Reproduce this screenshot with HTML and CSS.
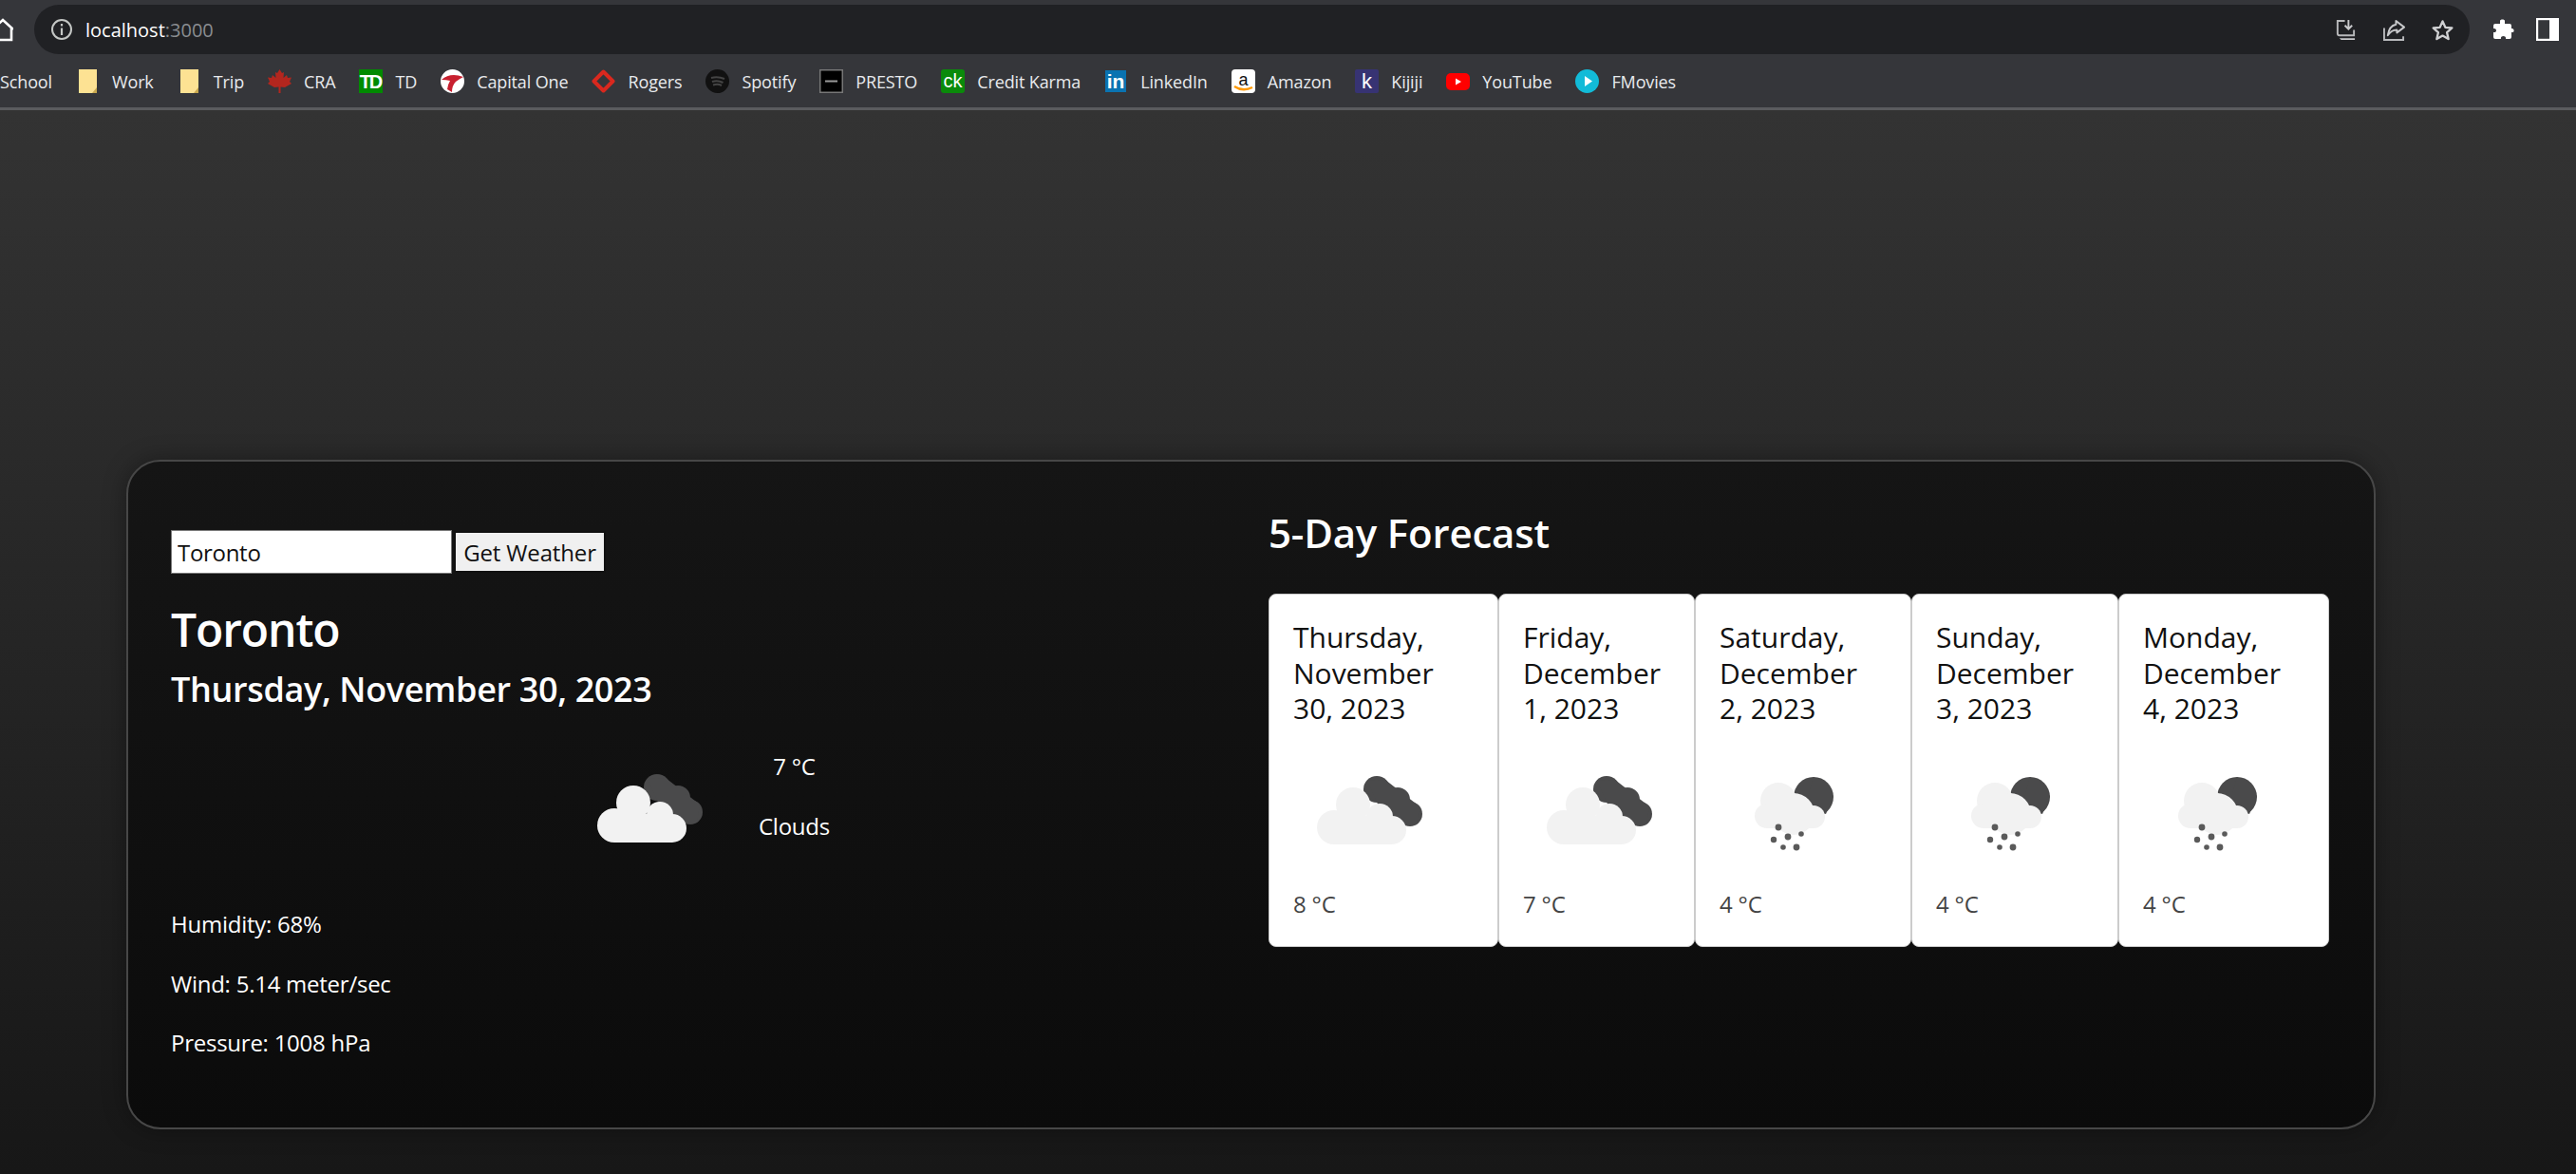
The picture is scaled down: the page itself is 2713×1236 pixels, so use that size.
FILE: index.html
```html
<!DOCTYPE html>
<html lang="en">
<head>
<meta charset="utf-8">
<title>Weather</title>
<link rel="stylesheet" href="styles.css">
</head>
<body>
<svg class="defs" width="0" height="0" aria-hidden="true">
  <defs>
    <symbol id="clouds" viewBox="0 0 150 150">
      <g class="dark">
        <circle cx="88" cy="50" r="14"/><circle cx="110" cy="61" r="13"/><circle cx="123" cy="76" r="13"/>
        <path d="M78 41 L97 40 L133 68 L130 87 L100 90 Z"/>
      </g>
      <g class="light">
        <circle cx="63" cy="66" r="18"/><circle cx="43" cy="90" r="18"/><circle cx="91" cy="79" r="14"/><circle cx="104" cy="93" r="15"/>
        <rect x="43" y="78" width="61" height="30"/>
      </g>
    </symbol>
    <symbol id="rain" viewBox="0 0 150 150">
      <circle class="dark" cx="99" cy="58" r="21"/>
      <path class="dark" d="M99 37 L120 57 L112 76 L90 70 Z"/>
      <g class="light">
        <circle cx="62" cy="62" r="19"/><circle cx="50" cy="78" r="13"/><circle cx="78" cy="76" r="22"/><circle cx="99" cy="79" r="12"/>
        <rect x="50" y="70" width="49" height="21"/>
      </g>
      <g class="drops">
        <circle cx="62" cy="90" r="3.4"/><circle cx="57" cy="103" r="3.2"/><circle cx="72" cy="100" r="3.4"/><circle cx="86" cy="97" r="2.8"/><circle cx="67" cy="111" r="2.8"/><circle cx="81" cy="111" r="3.4"/>
      </g>
    </symbol>
  </defs>
</svg>

<header class="chrome">
  <div class="toolbar">
    <svg class="home" viewBox="0 0 14 28"><path d="M-8 14 L3 4 L14 14 M12 12 V25 H-8" fill="none" stroke="#fff" stroke-width="2.600"/></svg>
    <div class="omnibox">
      <svg class="info" viewBox="0 0 24 24"><circle cx="12" cy="12" r="10" fill="none" stroke="#c4c7c5" stroke-width="2"/><path d="M12 10.500V18M12 6V8.500" stroke="#c4c7c5" stroke-width="2.200"/></svg>
      <span class="url">localhost<span class="port">:3000</span></span>
      <div class="omni-actions">
        <svg class="action" viewBox="0 0 24 24"><path d="M11 2H3V16Q3 18 5 18H21V12" fill="none" stroke="#b8b9bb" stroke-width="2"/><path d="M15 1V10M11 7L15 11L19 7" fill="none" stroke="#c8c9cb" stroke-width="2"/><path d="M5 21H22V23H7Z" fill="#c8c9cb"/></svg>
        <svg class="action" viewBox="0 0 24 24"><path d="M1 10V23H22V19" fill="none" stroke="#b8b9bb" stroke-width="2"/><path d="M14 2L23 9L15 15V12C10 12 8 14 5 18C6 11 9 7 14 6Z" fill="none" stroke="#c8c9cb" stroke-width="2" stroke-linejoin="round"/></svg>
        <svg class="action" viewBox="0 0 24 24"><path d="M12 2.500L15 9.200L22.300 9.900L16.800 14.800L18.400 22L12 18.300L5.600 22L7.200 14.800L1.700 9.900L9 9.200Z" fill="none" stroke="#d0d1d3" stroke-width="2.400" stroke-linejoin="round"/></svg>
      </div>
    </div>
    <svg class="tool" viewBox="0 0 24 24"><path d="M9 3C9 1 14 1 14 3V6H19Q21 6 21 8V11C24 10 25 16 21 15V20Q21 22 19 22H15C16 18 9 18 10 22H4Q2 22 2 20V15C6 16 6 10 2 11V8Q2 6 4 6H9Z" fill="#fff"/></svg>
    <svg class="tool" viewBox="0 0 24 24"><rect x="1" y="1" width="22" height="22" fill="none" stroke="#fff" stroke-width="2.400"/><rect x="14" y="1" width="9" height="22" fill="#fff"/></svg>
  </div>
  <nav class="bookmarks">
    <a class="bm bm-clip">School</a>
    <a class="bm"><svg class="fav" viewBox="0 0 25 25"><path d="M3 0H22V25H3Z" fill="#fde293"/><path d="M22 19L17 25H22Z" fill="#c9a94f"/></svg>Work</a>
    <a class="bm"><svg class="fav" viewBox="0 0 25 25"><path d="M3 0H22V25H3Z" fill="#fde293"/><path d="M22 19L17 25H22Z" fill="#c9a94f"/></svg>Trip</a>
    <a class="bm"><svg class="fav" viewBox="0 0 25 25"><path d="M12.500 0L15 4L17 3L16.500 9L20 6L21 9L25 8.500L23 13L25 15L18 19L13.500 18.500V25H11.500V18.500L7 19L0 15L2 13L0 8.500L4 9L5 6L8.500 9L8 3L10 4Z" fill="#b3261e"/></svg>CRA</a>
    <a class="bm"><svg class="fav" viewBox="0 0 25 25"><rect width="25" height="25" fill="#008a00"/><text x="12" y="20" class="fav-text fav-td">TD</text></svg>TD</a>
    <a class="bm"><svg class="fav" viewBox="0 0 25 25"><circle cx="12.500" cy="12.500" r="12.500" fill="#fff"/><path d="M1 11Q10 3 24 8Q20 10 16 13Q12 17 12 24L7 21Q8 15 10 12Q6 11 1 11Z" fill="#c8202f"/></svg>Capital One</a>
    <a class="bm"><svg class="fav" viewBox="0 0 25 25"><path d="M12.500 2.500L22.500 12.500L12.500 22.500L2.500 12.500Z" fill="none" stroke="#d9281e" stroke-width="4" stroke-linejoin="round"/></svg>Rogers</a>
    <a class="bm"><svg class="fav" viewBox="0 0 25 25"><circle cx="12.500" cy="12.500" r="12.500" fill="#111"/><path d="M6 9Q13 7 20 10M7 13Q13 11 18.500 14M8 16.500Q13 15 17 17" fill="none" stroke="#444" stroke-width="2"/></svg>Spotify</a>
    <a class="bm"><svg class="fav" viewBox="0 0 25 25"><rect x=".75" y=".75" width="23.500" height="23.500" fill="#000" stroke="#777" stroke-width="1.500"/><rect x="6" y="11.500" width="13" height="2" fill="#999"/></svg>PRESTO</a>
    <a class="bm"><svg class="fav" viewBox="0 0 25 25"><rect width="25" height="25" rx="3" fill="#0a8a0a"/><text x="12.500" y="19" class="fav-text fav-ck">ck</text></svg>Credit Karma</a>
    <a class="bm"><svg class="fav" viewBox="0 0 25 25"><rect x="1" y="1" width="22" height="23" fill="#0a73b1"/><text x="12" y="20" class="fav-text fav-in">in</text></svg>LinkedIn</a>
    <a class="bm"><svg class="fav" viewBox="0 0 25 25"><rect width="25" height="25" rx="4" fill="#fff"/><text x="12.500" y="16.500" class="fav-text fav-a">a</text><path d="M3 18Q12 24 22 19" fill="none" stroke="#f90" stroke-width="2.400"/></svg>Amazon</a>
    <a class="bm"><svg class="fav" viewBox="0 0 25 25"><rect width="25" height="25" rx="2" fill="#373373"/><text x="12.500" y="20" class="fav-text fav-k">k</text></svg>Kijiji</a>
    <a class="bm"><svg class="fav" viewBox="0 0 25 25"><rect y="4" width="25" height="18" rx="5" fill="#f00"/><path d="M10 9.500L16 13L10 16.500Z" fill="#fff"/></svg>YouTube</a>
    <a class="bm"><svg class="fav" viewBox="0 0 25 25"><circle cx="12.500" cy="12.500" r="12.500" fill="#12bbd8"/><path d="M10 7L18 12.500L10 18Z" fill="#fff"/></svg>FMovies</a>
  </nav>
</header>

<main class="page">
  <section class="panel">
    <div class="current">
      <form class="search">
        <input class="city" type="text" value="Toronto">
        <button class="go" type="button">Get Weather</button>
      </form>
      <h1 class="place">Toronto</h1>
      <h2 class="today">Thursday, November 30, 2023</h2>
      <div class="now">
        <svg class="wx"><use href="#clouds"/></svg>
        <div class="now-text">
          <p>7 °C</p>
          <p>Clouds</p>
        </div>
      </div>
      <div class="stats">
        <p>Humidity: 68%</p>
        <p>Wind: 5.14 meter/sec</p>
        <p>Pressure: 1008 hPa</p>
      </div>
    </div>
    <div class="forecast">
      <h2 class="fc-title">5-Day Forecast</h2>
      <div class="days">
        <article class="day"><h3>Thursday,<br>November<br>30, 2023</h3><svg class="wx"><use href="#clouds"/></svg><p>8 °C</p></article>
        <article class="day"><h3>Friday,<br>December<br>1, 2023</h3><svg class="wx"><use href="#clouds"/></svg><p>7 °C</p></article>
        <article class="day"><h3>Saturday,<br>December<br>2, 2023</h3><svg class="wx"><use href="#rain"/></svg><p>4 °C</p></article>
        <article class="day"><h3>Sunday,<br>December<br>3, 2023</h3><svg class="wx"><use href="#rain"/></svg><p>4 °C</p></article>
        <article class="day"><h3>Monday,<br>December<br>4, 2023</h3><svg class="wx"><use href="#rain"/></svg><p>4 °C</p></article>
      </div>
    </div>
  </section>
</main>
</body>
</html>
```
FILE: styles.css
```css
* { box-sizing: border-box; }
html, body { height: 100%; }
body {
  margin: 0;
  display: flex;
  flex-direction: column;
  overflow: hidden;
  background: #111;
  font-family: "Open Sans", "Noto Sans", sans-serif;
  color: #fff;
}
.defs { position: absolute; }
.dark { fill: #4a4a4b; }
.light { fill: #f2f2f2; }
.drops { fill: #5a5a5a; }

/* browser chrome */
.chrome { flex: none; height: 116px; background: #35363a; border-bottom: 3px solid #5a5b5e; }
.toolbar { height: 62px; display: flex; align-items: center; padding: 5px 18px 5px 0; }
.home { width: 14px; height: 28px; flex: none; margin: 0 22px 0 0; }
.omnibox {
  flex: 1;
  height: 52px;
  background: #202124;
  border-radius: 26px;
  display: flex;
  align-items: center;
  padding: 0 17px 0 17px;
}
.info { width: 24px; height: 24px; flex: none; margin-right: 13px; }
.url { font-size: 20px; letter-spacing: 0; color: #fff; }
.port { color: #8a8d91; }
.omni-actions { margin-left: auto; display: flex; gap: 28px; }
.action { width: 23px; height: 23px; }
.tool { width: 24px; height: 24px; flex: none; margin-left: 23px; }
.bookmarks { height: 49px; display: flex; align-items: center; gap: 25px; padding-bottom: 2px; }
.bm { display: flex; align-items: center; gap: 13px; font-size: 18px; letter-spacing: -.13px; color: #e8eaed; white-space: nowrap; }
.fav { width: 25px; height: 25px; flex: none; }
.fav-text { text-anchor: middle; font-family: "Liberation Sans", sans-serif; fill: #fff; font-weight: 400; letter-spacing: 0; }
.fav-td { font-size: 20px; letter-spacing: -2px; font-weight: 700; }
.fav-ck { font-size: 20px; }
.fav-in { font-size: 21px; font-weight: 700; }
.fav-a { font-size: 18px; fill: #111; }
.fav-k { font-size: 22px; }

/* page */
.page {
  flex: 1;
  min-height: 0;
  padding: 368px 211px 0 133px;
  background: linear-gradient(#333333, #171717);
}
.panel {
  height: 705px;
  display: grid;
  grid-template-columns: 1fr 1fr;
  gap: 40px;
  padding: 72px 47px 0 45px;
  border: 2px solid #474747;
  border-radius: 36px;
  background: linear-gradient(#151515, #0b0b0b);
  box-shadow: 0 0 24px rgba(0, 0, 0, .35);
}
.search { display: flex; align-items: center; gap: 2px; height: 46px; }
.city {
  width: 296px;
  height: 46px;
  padding: 0 6px;
  border: 1px solid #777;
  background: #fff;
  color: #111;
  font: 400 24px "Open Sans", sans-serif;
  letter-spacing: -.3px;
}
.go {
  width: 160px;
  height: 44px;
  padding: 0;
  border: 2px solid #111;
  background: #f0f0f0;
  color: #111;
  font: 400 24px "Open Sans", sans-serif;
  letter-spacing: -.15px;
}
.place { margin: 29px 0 0; font-size: 48px; line-height: 60px; font-weight: 600; letter-spacing: -1.100px; }
.today { margin: 8px 0 0; font-size: 36px; line-height: 50px; font-weight: 600; letter-spacing: -.35px; }
.now { display: flex; align-items: flex-start; margin: 28px 0 0 424px; }
.wx { display: block; width: 150px; height: 150px; flex: none; filter: blur(.5px); }
.now-text { margin: 10px 0 0 45px; text-align: center; }
.now-text p, .stats p { margin: 0 0 26.500px; font-size: 24px; line-height: 36px; letter-spacing: -.25px; }
.stats { margin-top: 26px; }
.fc-title { margin: -26px 0 0; font-size: 42px; line-height: 58px; font-weight: 600; letter-spacing: -.2px; }
.days { display: grid; grid-template-columns: 242px 207px 228px 218px 222px; margin-top: 35px; }
.day {
  height: 372px;
  padding: 26px 25px 0;
  border: 1px solid #ccc;
  border-radius: 8px;
  background: #fff;
  color: #111;
}
.day h3 { margin: 0; font-size: 30px; line-height: 37.500px; font-weight: 400; letter-spacing: 0; }
.day .wx { margin-top: 16px; }
.day p { margin: 3px 0 0; font-size: 24px; line-height: 36px; letter-spacing: -.2px; color: #444; }
```
